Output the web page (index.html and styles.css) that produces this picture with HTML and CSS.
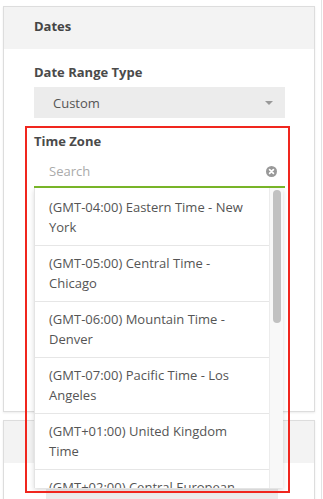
FILE: index.html
```html
<!DOCTYPE html>
<html lang="en">
  <head>
    <meta charset="UTF-8" />
    <meta name="viewport" content="width=device-width, initial-scale=1" />
    <title>Dates</title>
    <link rel="stylesheet" href="styles.css">
  </head>
  <body>
    <div class="page">
      <div class="column">
        <section class="card">
          <header class="card-head">Dates</header>
          <div class="card-body dates-body">
            <div class="field">
              <label class="field-label">Date Range Type</label>
              <div class="select">
                <span>Custom</span>
                <span class="caret"></span>
              </div>
            </div>
            <div class="field field-tz">
              <label class="field-label">Time Zone</label>
              <div class="search">
                <span class="placeholder">Search</span>
                <svg class="clear" width="11" height="11" viewBox="0 0 11 11">
                  <circle cx="5.5" cy="5.5" r="5.5" fill="#999" />
                  <path d="M3.6 3.6 L7.4 7.4 M7.4 3.6 L3.6 7.4" stroke="#fff" stroke-width="1.7" stroke-linecap="round" />
                </svg>
                <div class="dropdown">
                  <ul class="options">
                    <li>(GMT-04:00) Eastern Time - New York</li>
                    <li>(GMT-05:00) Central Time - Chicago</li>
                    <li>(GMT-06:00) Mountain Time - Denver</li>
                    <li>(GMT-07:00) Pacific Time - Los Angeles</li>
                    <li>(GMT+01:00) United Kingdom Time</li>
                    <li>(GMT+02:00) Central European Time</li>
                  </ul>
                  <div class="scrollbar"><div class="thumb"></div></div>
                </div>
              </div>
              <div class="highlight"></div>
            </div>
          </div>
        </section>
        <section class="card">
          <header class="card-head"></header>
          <div class="card-body next-body">
            <div class="select select-next"></div>
          </div>
        </section>
      </div>
      <div class="edge"></div>
    </div>
  </body>
</html>
```

FILE: styles.css
```css
html,
body {
  margin: 0;
  padding: 0;
  height: 499px;
  overflow: hidden;
  background: #fff;
  font-family: "Open Sans", sans-serif;
  font-size: 13px;
  color: #555;
}

.page {
  display: flex;
  height: 100%;
}

.column {
  width: 312px;
  margin-left: 3px;
  padding-top: 6px;
  flex-shrink: 0;
}

.edge {
  flex: 1;
  margin-left: 6px;
  border-left: 1px solid #e3e3e3;
}

.card {
  border: 1px solid #ddd;
  background: #fff;
  box-shadow: 0 1px 2px rgba(0, 0, 0, 0.08);
  margin-bottom: 8px;
}

.card-head {
  height: 42px;
  box-sizing: border-box;
  padding: 10px 30px 0;
  line-height: 18px;
  background: #f3f3f3;
  font-weight: 700;
  color: #444;
}

.card-body {
  padding: 14px 29px 0 30px;
}

.dates-body {
  padding-bottom: 223px;
}

.field {
  margin-bottom: 14px;
}

.field:last-child {
  margin-bottom: 0;
}

.field-tz {
  position: relative;
}

.field-label {
  display: block;
  font-weight: 700;
  line-height: 18px;
  margin-bottom: 6px;
  color: #4a4a4a;
}

.select {
  height: 31px;
  background: #ececec;
  display: flex;
  align-items: center;
  justify-content: space-between;
  padding: 0 12px 0 19px;
}

.caret {
  width: 0;
  height: 0;
  border-left: 4px solid transparent;
  border-right: 4px solid transparent;
  border-top: 4px solid #999;
}

.search {
  position: relative;
  height: 30px;
  border-bottom: 2px solid #7ab829;
  display: flex;
  align-items: center;
  justify-content: space-between;
  padding: 0 8px 0 15px;
}

.placeholder {
  color: #aaa;
}

.dropdown {
  position: absolute;
  top: 100%;
  left: 0;
  margin-top: 2px;
  width: 249px;
  height: 300px;
  display: flex;
  background: #fff;
  border-left: 1px solid #e4e4e4;
  box-sizing: border-box;
  box-shadow: 0 2px 5px rgba(0, 0, 0, 0.15);
  z-index: 5;
}

.options {
  list-style: none;
  margin: 0;
  padding: 2px 0 0;
  flex: 1;
  overflow: hidden;
}

.options li {
  padding: 8px 15px 8px 14px;
  line-height: 19.5px;
  border-bottom: 1px solid #e6e6e6;
  color: #555;
}

.scrollbar {
  width: 13px;
  background: #f8f8f8;
  border-left: 1px solid #ececec;
}

.thumb {
  width: 8px;
  height: 133px;
  margin: 2px 0 0 3px;
  border-radius: 4px;
  background: #c1c1c1;
}

.highlight {
  position: absolute;
  top: -6px;
  left: -9px;
  width: 265px;
  height: 367px;
  box-sizing: border-box;
  border: 2px solid #f0261e;
  pointer-events: none;
  z-index: 6;
}

.next-body {
  padding: 26px 36px 0 42px;
}

.select-next {
  height: 31px;
}
```
